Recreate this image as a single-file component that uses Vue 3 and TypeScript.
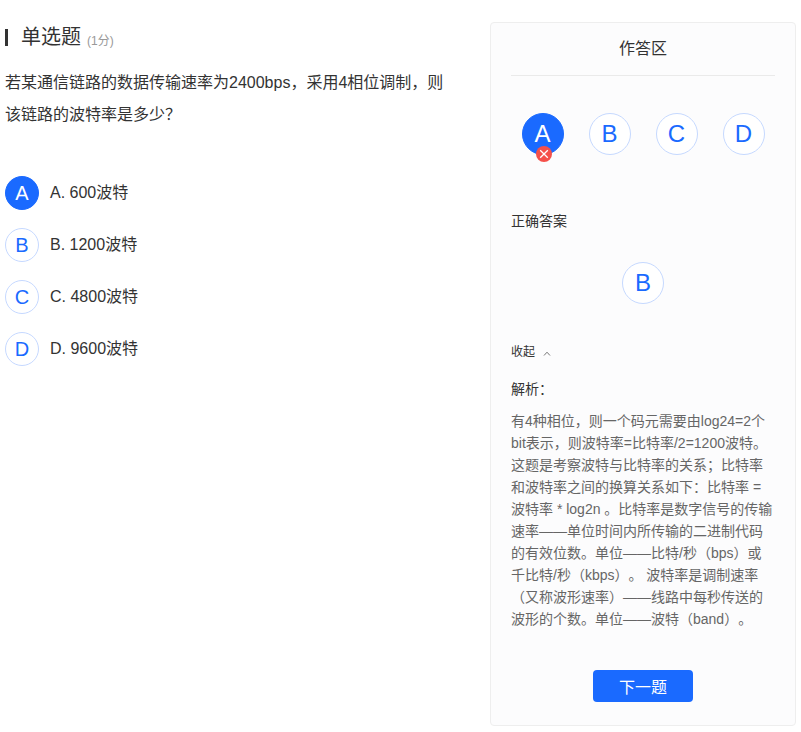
<script setup lang="ts">
const options = [
  { key: 'A', text: 'A. 600波特', active: true },
  { key: 'B', text: 'B. 1200波特', active: false },
  { key: 'C', text: 'C. 4800波特', active: false },
  { key: 'D', text: 'D. 9600波特', active: false },
]
const analysis =
  '有4种相位，则一个码元需要由log24=2个bit表示，则波特率=比特率/2=1200波特。这题是考察波特与比特率的关系；比特率和波特率之间的换算关系如下：比特率 = 波特率 * log2n 。比特率是数字信号的传输速率——单位时间内所传输的二进制代码的有效位数。单位——比特/秒（bps）或千比特/秒（kbps）。 波特率是调制速率（又称波形速率）——线路中每秒传送的波形的个数。单位——波特（band）。'
</script>

<template>
  <div class="page">
    <main class="left">
      <div class="title"><span class="bar"></span><span class="name">单选题</span><span class="score">(1分)</span></div>
      <p class="question">若某通信链路的数据传输速率为2400bps，采用4相位调制，则该链路的波特率是多少？</p>
      <ul class="options">
        <li v-for="o in options" :key="o.key" class="option">
          <span class="circle small" :class="{ active: o.active }">{{ o.key }}</span>
          <span class="otext">{{ o.text }}</span>
        </li>
      </ul>
    </main>
    <aside class="panel">
      <h2 class="phead">作答区</h2>
      <div class="answers">
        <span v-for="o in options" :key="o.key" class="circle" :class="{ active: o.active }">
          {{ o.key }}
          <svg v-if="o.active" class="wrong" width="16" height="16" viewBox="0 0 16 16">
            <circle cx="8" cy="8" r="8" fill="#f5504a" />
            <path d="M4.2 4.2l7.6 7.6M11.8 4.2l-7.6 7.6" stroke="#fff" stroke-width="1.3" fill="none" />
          </svg>
        </span>
      </div>
      <div class="label">正确答案</div>
      <div class="correct"><span class="circle">B</span></div>
      <div class="toggle">
        <span>收起</span>
        <svg width="8" height="5" viewBox="0 0 8 5"><path d="M1 4.5L4 1.2l3 3.3" stroke="#777" fill="none" /></svg>
      </div>
      <div class="label explain">解析：</div>
      <p class="analysis">{{ analysis }}</p>
      <div class="foot"><button class="next" type="button">下一题</button></div>
    </aside>
  </div>
</template>

<style>
html, body { margin: 0; background: #fff; }
</style>

<style scoped>
.page {
  width: 801px;
  height: 732px;
  box-sizing: border-box;
  padding: 22px 5px 6px 5px;
  display: flex;
  justify-content: space-between;
  font-family: "Liberation Sans", "Noto Sans CJK SC", sans-serif;
  text-spacing-trim: space-all;
  color: #333;
  overflow: hidden;
}
.left { width: 440px; }
.title { display: flex; align-items: center; height: 30px; }
.bar { width: 3px; height: 17px; background: #333; margin-right: 14px; margin-top: 1px; }
.name { font-size: 20px; line-height: 30px; color: #333; margin-left: -1px; }
.score { font-size: 12px; color: #999; margin-left: 6px; margin-top: 4px; }
.question { margin: 15px 0 0; font-size: 16px; line-height: 32px; color: #333; }
.options { list-style: none; margin: 45px 0 0; padding: 0; display: flex; flex-direction: column; gap: 18px; }
.option { display: flex; align-items: center; gap: 11px; }
.otext { font-size: 16px; color: #333; margin-bottom: 4px; }
.circle {
  position: relative;
  width: 42px;
  height: 42px;
  box-sizing: border-box;
  border: 1px solid #c6d9ff;
  border-radius: 50%;
  background: #fff;
  color: #1a6aff;
  font-size: 24px;
  display: flex;
  align-items: center;
  justify-content: center;
  flex: none;
}
.circle.small { width: 34px; height: 34px; font-size: 20px; }
.circle.active { background: #1a6aff; border-color: #1a6aff; color: #fff; }
.wrong { position: absolute; left: 13px; top: 32px; }
.panel {
  width: 306px;
  height: 704px;
  box-sizing: border-box;
  border: 1px solid #eee;
  border-radius: 4px;
  background: #fcfcfd;
  padding: 0 20px;
}
.phead {
  margin: 0;
  height: 52px;
  line-height: 52px;
  font-size: 16px;
  font-weight: 400;
  text-align: center;
  color: #333;
  border-bottom: 1px solid #eaeaea;
}
.answers { display: flex; justify-content: center; gap: 25px; margin-top: 37px; }
.label { font-size: 14px; line-height: 20px; color: #333; margin-top: 56px; }
.correct { display: flex; justify-content: center; margin-top: 31px; }
.toggle { display: flex; align-items: center; gap: 8px; font-size: 12px; line-height: 18px; color: #333; margin-top: 39px; }
.toggle svg { margin-top: 2px; }
.label.explain { margin-top: 18px; }
.analysis { margin: 11px 0 0; font-size: 14px; line-height: 22px; color: #666; }
.foot { display: flex; justify-content: center; margin-top: 40px; }
.next {
  width: 100px;
  height: 32px;
  border: 0;
  border-radius: 4px;
  background: #1a6aff;
  color: #fff;
  font: inherit;
  font-size: 16px;
  padding: 0;
}
</style>
